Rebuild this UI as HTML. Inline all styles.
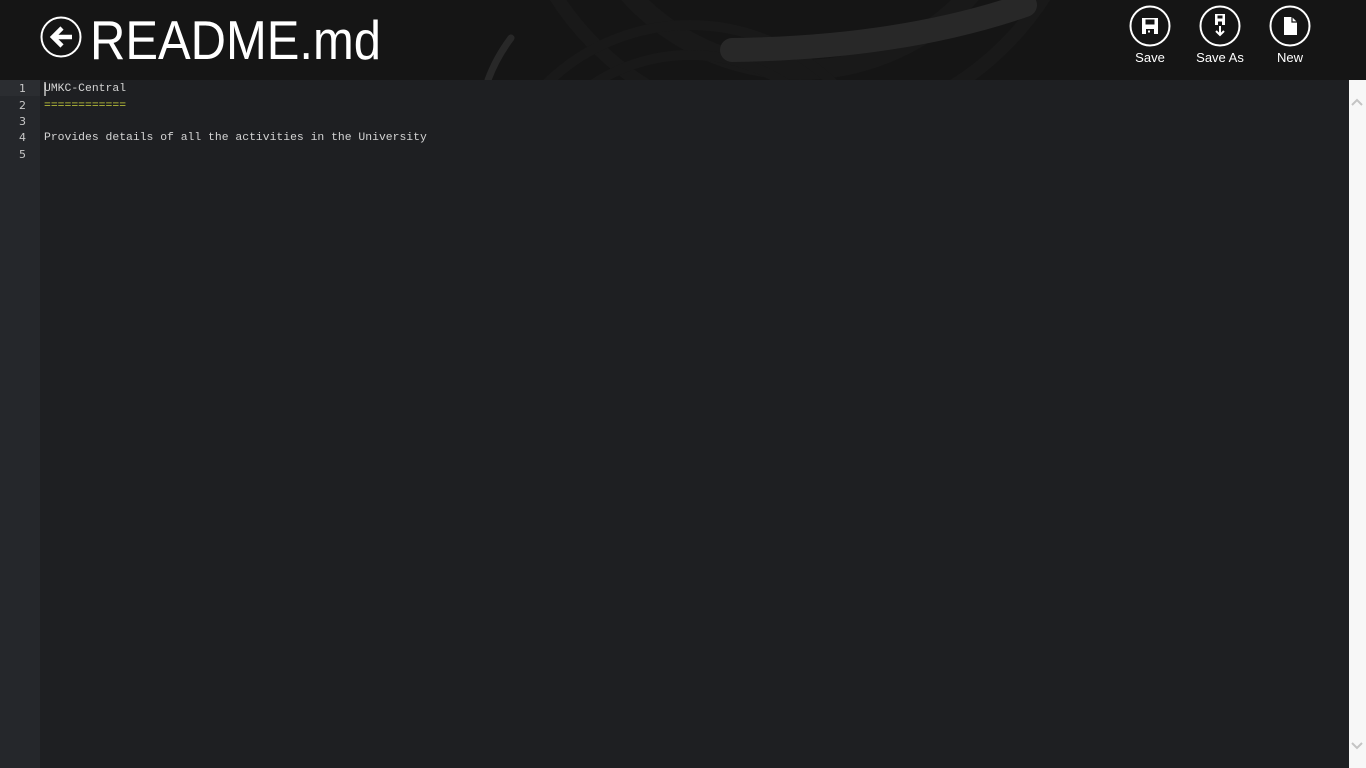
<!DOCTYPE html>
<html><head><meta charset="utf-8"><style>
*{margin:0;padding:0;box-sizing:border-box}
body{width:1366px;height:768px;overflow:hidden;background:#1e1f22;font-family:"Liberation Sans",sans-serif;position:relative}
#hdr{position:absolute;left:0;top:0;width:1366px;height:80px;background:#151515;overflow:hidden}
#title{position:absolute;left:90px;top:8px;font-size:55px;color:#fff;font-weight:300;line-height:64px;transform:scaleX(0.89);transform-origin:0 0}
.lbl{position:absolute;top:50px;color:#fff;font-size:13px;white-space:nowrap;transform:translateX(-50%)}
#gutter{position:absolute;left:0;top:80px;width:40px;height:688px;background:#25272b}
.ln{position:absolute;left:0;width:40px;font-family:"DejaVu Sans",sans-serif;font-size:11px;color:#c8c8c8;padding-left:19px;height:16px;line-height:16px}
.code{position:absolute;left:44px;font-family:"Liberation Mono",monospace;font-size:11.4px;color:#d4d4d4;white-space:pre;line-height:16px}
#sb{position:absolute;left:1349px;top:80px;width:17px;height:688px;background:#f7f7f7}
</style></head><body>
<div id="hdr">
<svg width="1366" height="80" style="position:absolute;left:0;top:0">
<g fill="none" stroke="#191919">
<circle cx="800" cy="-160" r="230" stroke-width="20"/>
<circle cx="800" cy="-160" r="290" stroke-width="14"/>
<circle cx="690" cy="230" r="175" stroke-width="10"/>
<circle cx="690" cy="230" r="205" stroke-width="10"/>
</g>
<g fill="none" stroke="#282828" stroke-linecap="round">
<path d="M732 50 Q900 48 1025 5" stroke-width="24"/>
<path d="M511 38 Q496 58 488 80" stroke-width="7"/>
</g>
</svg>
<svg width="44" height="44" style="position:absolute;left:39px;top:15px" viewBox="0 0 44 44">
<circle cx="22" cy="22" r="19.5" fill="none" stroke="#fff" stroke-width="2"/>
<path d="M33 22H15M23 13l-9 9 9 9" fill="none" stroke="#fff" stroke-width="4.5" stroke-linejoin="miter"/>
</svg>
<div id="title">README.md</div>
<svg width="44" height="44" style="position:absolute;left:1128px;top:4px" viewBox="0 0 44 44">
<circle cx="22" cy="22" r="19.5" fill="none" stroke="#fff" stroke-width="2"/>
<path d="M14 14h16v16H14z" fill="#fff"/><rect x="17.5" y="15.5" width="9" height="5" fill="#151515"/><rect x="18" y="25" width="8" height="5" fill="#151515"/><rect x="20" y="26.5" width="2" height="2" fill="#fff"/>
</svg>
<svg width="44" height="44" style="position:absolute;left:1198px;top:4px" viewBox="0 0 44 44">
<circle cx="22" cy="22" r="19.5" fill="none" stroke="#fff" stroke-width="2"/>
<path d="M17 10h10v11H17z" fill="#fff"/><rect x="19.5" y="11.5" width="5" height="3" fill="#151515"/><rect x="20" y="17.5" width="4" height="3.5" fill="#151515"/>
<path d="M22 22v9M18 27l4 4 4-4" fill="none" stroke="#fff" stroke-width="2"/>
</svg>
<svg width="44" height="44" style="position:absolute;left:1268px;top:4px" viewBox="0 0 44 44">
<circle cx="22" cy="22" r="19.5" fill="none" stroke="#fff" stroke-width="2"/>
<path d="M16 13h8l5 5v13H16z" fill="#fff"/><path d="M24 13v5h5" fill="none" stroke="#151515" stroke-width="1.2"/>
</svg>
<div class="lbl" style="left:1150px">Save</div>
<div class="lbl" style="left:1220px">Save As</div>
<div class="lbl" style="left:1290px">New</div>
</div>
<div id="gutter"></div>
<div style="position:absolute;left:0;top:80px;width:40px;height:16px;background:#2b2d31"></div>
<div class="ln" style="top:81px">1</div>
<div class="ln" style="top:98px">2</div>
<div class="ln" style="top:114px">3</div>
<div class="ln" style="top:130px">4</div>
<div class="ln" style="top:147px">5</div>
<div style="position:absolute;left:44px;top:82px;width:2px;height:14px;background:#9a9a9a"></div>
<div class="code" style="top:81px">UMKC-Central</div>
<div class="code" style="top:98px;color:#c8cf3c">============</div>
<div class="code" style="top:130px">Provides details of all the activities in the University</div>
<div id="sb">
<svg width="17" height="688" style="position:absolute;left:0;top:0"><path d="M3 25l5-5 5 5" fill="none" stroke="#c4c4c4" stroke-width="2"/><path d="M3 663l5 5 5-5" fill="none" stroke="#c4c4c4" stroke-width="2"/></svg>
</div>
</body></html>
